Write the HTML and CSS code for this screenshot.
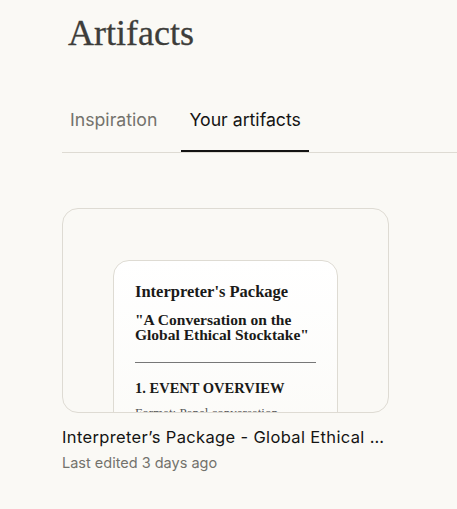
FILE: index.html
```html
<!DOCTYPE html>
<html lang="en">
<head>
    <meta charset="UTF-8">
    <meta name="viewport" content="width=device-width, initial-scale=1.0">
    <title>Artifacts</title>
    <link rel="stylesheet" href="styles.css">
</head>
<body>
    <div class="page">
        <h1 class="page-title">Artifacts</h1>

        <div class="tabs">
            <div class="tab">Inspiration</div>
            <div class="tab active">Your artifacts</div>
        </div>

        <div class="artifact-grid">
            <div class="artifact">
                <div class="preview">
                    <div class="doc">
                        <h2 class="doc-title">Interpreter's Package</h2>
                        <h3 class="doc-subtitle">"A Conversation on the Global Ethical Stocktake"</h3>
                        <hr class="doc-rule">
                        <h4 class="doc-section">1. EVENT OVERVIEW</h4>
                        <p class="doc-text">Format: Panel conversation</p>
                    </div>
                </div>
                <div class="artifact-name">Interpreter’s Package - Global Ethical Stocktake Event</div>
                <div class="artifact-meta">Last edited 3 days ago</div>
            </div>
        </div>
    </div>
</body>
</html>
```

FILE: styles.css
```css
:root {
    --background: #faf9f5;
    --text: #141413;
    --muted: #73726c;
    --border: #dedbd3;
}

body {
    margin: 0;
    background: var(--background);
    color: var(--text);
    font-family: Inter, "Liberation Sans", sans-serif;
}

.page {
    padding-left: 62px;
}

.page-title {
    margin: 12px 0 0 6px;
    font-family: "Liberation Serif", serif;
    font-weight: normal;
    font-size: 36px;
    line-height: 42px;
    color: #3d3d3a;
    -webkit-text-stroke: 0.3px #3d3d3a;
}

.tabs {
    display: flex;
    gap: 16px;
    margin-top: 46px;
    border-bottom: 1px solid var(--border);
}

.tab {
    padding: 8px 8px 18px;
    font-size: 17.7px;
    line-height: 24px;
    color: var(--muted);
    border-bottom: 2px solid transparent;
}

.tab.active {
    color: var(--text);
    border-bottom-color: var(--text);
}

.artifact-grid {
    margin-top: 55px;
}

.artifact {
    width: 327px;
}

.preview {
    height: 205px;
    box-sizing: border-box;
    padding-top: 51px;
    border: 1px solid var(--border);
    border-radius: 16px;
    overflow: hidden;
    display: flex;
    justify-content: center;
}

.doc {
    width: 225px;
    height: 240px;
    box-sizing: border-box;
    padding: 21px 21px 0;
    border: 1px solid var(--border);
    border-radius: 16px;
    background: linear-gradient(#ffffff, var(--background));
    font-family: "Liberation Serif", serif;
    color: #1a1a18;
}

.doc-title {
    margin: 0;
    font-size: 16.5px;
    line-height: 20px;
}

.doc-subtitle {
    margin: 10px 0 0;
    font-size: 15.5px;
    line-height: 15px;
}

.doc-rule {
    margin: 20px 0 0;
    border: 0;
    border-top: 1px solid #777;
}

.doc-section {
    margin: 16px 0 0;
    font-size: 14.5px;
    line-height: 18px;
}

.doc-text {
    margin: 7px 0 0;
    font-size: 13px;
    line-height: 18px;
    color: #555;
}

.artifact-name {
    margin-top: 13px;
    font-size: 16.5px;
    line-height: 22px;
    letter-spacing: 0.35px;
    white-space: nowrap;
    overflow: hidden;
    text-overflow: ellipsis;
}

.artifact-meta {
    margin-top: 5px;
    font-size: 14.5px;
    line-height: 20px;
    color: var(--muted);
}
```
